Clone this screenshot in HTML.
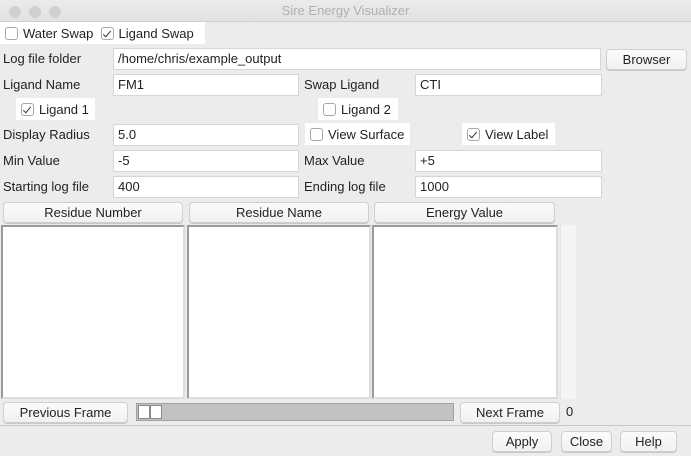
<!DOCTYPE html><html><head><style>
*{box-sizing:border-box;margin:0;padding:0}
body{width:691px;height:456px;background:#ececec;font-family:"Liberation Sans",sans-serif;font-size:13px;color:#222;position:relative;overflow:hidden}
.a{position:absolute}
.t{position:absolute;line-height:22px;white-space:nowrap}
.in{position:absolute;background:#fff;border:1px solid #d6d6d6;height:22px;line-height:20px;padding-left:4px}
.btn{position:absolute;background:linear-gradient(#fbfbfb,#f1f1f1);border:1px solid #cfcfcf;border-radius:4px;text-align:center;line-height:19px;box-shadow:0 1px 0 #c8c8c8}
.cb{position:absolute;background:#fff;height:22px;white-space:nowrap;padding-left:5px;display:flex;align-items:center}
.cb i{display:block;position:relative;width:13px;height:13px;border:1px solid #a8a8a8;border-radius:3px;margin-right:5px;background:#fff;flex:none}
.cb i.c::after{content:"";position:absolute;left:3px;top:1px;width:3px;height:7px;border:solid #333;border-width:0 1.5px 1.5px 0;transform:rotate(40deg)}
.list{position:absolute;background:#fff;border:2px solid #9a9a9a;border-right-color:#ddd;border-bottom-color:#ddd}
</style></head><body>
<div class="a" style="left:0;top:0;width:691px;height:22px;background:linear-gradient(#ebebeb,#e2e2e2);border-bottom:1px solid #d0d0d0"></div>
<div class="a" style="left:9px;top:6px;width:12px;height:12px;border-radius:6px;background:#d0d0d0"></div>
<div class="a" style="left:29px;top:6px;width:12px;height:12px;border-radius:6px;background:#d0d0d0"></div>
<div class="a" style="left:49px;top:6px;width:12px;height:12px;border-radius:6px;background:#d0d0d0"></div>
<div class="t" style="left:0;width:691px;top:0;text-align:center;color:#b0b0b0">Sire Energy Visualizer</div>

<div class="cb" style="left:0;top:22px;width:205px"><i></i>Water Swap&nbsp;&nbsp;<i class="c"></i>Ligand Swap</div>

<div class="t" style="left:3px;top:48px">Log file folder</div>
<div class="in" style="left:113px;top:48px;width:488px">/home/chris/example_output</div>
<div class="btn" style="left:606px;top:49px;width:81px">Browser</div>

<div class="t" style="left:3px;top:74px">Ligand Name</div>
<div class="in" style="left:113px;top:74px;width:186px">FM1</div>
<div class="t" style="left:304px;top:74px">Swap Ligand</div>
<div class="in" style="left:415px;top:74px;width:187px">CTI</div>

<div class="cb" style="left:16px;top:98px;width:79px"><i class="c"></i>Ligand 1</div>
<div class="cb" style="left:318px;top:98px;width:80px"><i></i>Ligand 2</div>

<div class="t" style="left:3px;top:124px">Display Radius</div>
<div class="in" style="left:113px;top:124px;width:186px">5.0</div>
<div class="cb" style="left:305px;top:123px;width:105px"><i></i>View Surface</div>
<div class="cb" style="left:462px;top:123px;width:93px"><i class="c"></i>View Label</div>

<div class="t" style="left:3px;top:150px">Min Value</div>
<div class="in" style="left:113px;top:150px;width:186px">-5</div>
<div class="t" style="left:304px;top:150px">Max Value</div>
<div class="in" style="left:415px;top:150px;width:187px">+5</div>

<div class="t" style="left:3px;top:176px">Starting log file</div>
<div class="in" style="left:113px;top:176px;width:186px">400</div>
<div class="t" style="left:304px;top:176px">Ending log file</div>
<div class="in" style="left:415px;top:176px;width:187px">1000</div>

<div class="btn" style="left:3px;top:202px;width:180px">Residue Number</div>
<div class="btn" style="left:189px;top:202px;width:180px">Residue Name</div>
<div class="btn" style="left:374px;top:202px;width:181px">Energy Value</div>

<div class="list" style="left:1px;top:225px;width:184px;height:174px"></div>
<div class="list" style="left:187px;top:225px;width:184px;height:174px"></div>
<div class="list" style="left:372px;top:225px;width:186px;height:174px"></div>
<div class="a" style="left:560px;top:225px;width:16px;height:174px;background:#f4f4f4;border-left:1px solid #e2e2e2"></div>

<div class="btn" style="left:3px;top:402px;width:125px">Previous Frame</div>
<div class="a" style="left:136px;top:403px;width:318px;height:18px;background:#c2c2c2;border:1px solid #a0a0a0"></div>
<div class="a" style="left:138px;top:405px;width:12px;height:14px;background:#fff;border:1px solid #888"></div>
<div class="a" style="left:150px;top:405px;width:12px;height:14px;background:#fff;border:1px solid #888"></div>
<div class="btn" style="left:460px;top:402px;width:100px">Next Frame</div>
<div class="t" style="left:566px;top:401px">0</div>

<div class="a" style="left:0;top:425px;width:691px;height:1px;background:#c8c8c8"></div>
<div class="btn" style="left:492px;top:431px;width:60px">Apply</div>
<div class="btn" style="left:561px;top:431px;width:51px">Close</div>
<div class="btn" style="left:620px;top:431px;width:57px">Help</div>
</body></html>
